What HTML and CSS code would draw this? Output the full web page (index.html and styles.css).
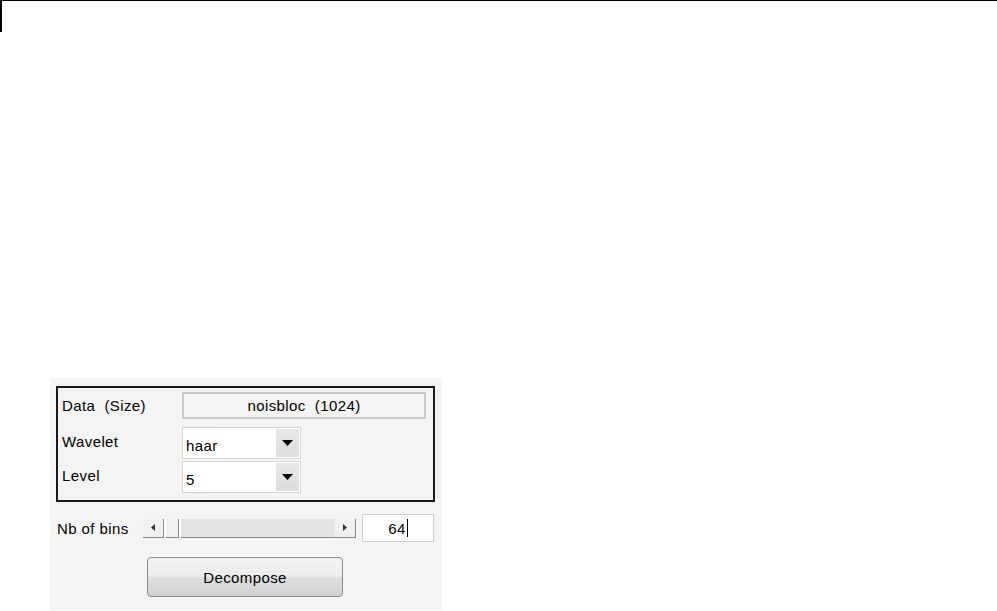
FILE: index.html
```html
<!DOCTYPE html>
<html>
<head>
<meta charset="utf-8">
<link rel="stylesheet" href="styles.css">
</head>
<body>
<div class="corner"></div>
<div class="panel">
  <div class="frame">
    <div class="row r1">
      <span class="lbl">Data  (Size)</span>
      <div class="field">noisbloc  (1024)</div>
    </div>
    <div class="row r2">
      <span class="lbl">Wavelet</span>
      <div class="popup"><span class="val">haar</span><span class="abtn"><svg width="11" height="6" viewBox="0 0 11 6"><path d="M0 0H11L5.5 6Z" fill="#000"/></svg></span></div>
    </div>
    <div class="row r3">
      <span class="lbl">Level</span>
      <div class="popup"><span class="val">5</span><span class="abtn"><svg width="11" height="6" viewBox="0 0 11 6"><path d="M0 0H11L5.5 6Z" fill="#000"/></svg></span></div>
    </div>
  </div>
  <div class="bins">
    <span class="blbl">Nb of bins</span>
    <div class="slider">
      <span class="sbtn"><svg width="4" height="7" viewBox="0 0 4 7"><path d="M4 0V7L0 3.5Z" fill="#333"/></svg></span>
      <span class="thumb"></span>
      <span class="track"></span>
      <span class="sbtn"><svg width="4" height="7" viewBox="0 0 4 7"><path d="M0 0V7L4 3.5Z" fill="#333"/></svg></span>
    </div>
    <div class="edit">64<span class="caret"></span></div>
  </div>
  <div class="btnrow"><div class="button">Decompose</div></div>
</div>
</body>
</html>
```
FILE: styles.css
```css
html, body {
  margin: 0;
  padding: 0;
  background: #fff;
}
body {
  font-family: "Liberation Sans", Arial, sans-serif;
  font-size: 15px;
  letter-spacing: 0.4px;
  color: #000;
}
.corner {
  height: 31px;
  border-top: 1px solid #000;
  border-left: 2px solid #000;
}
.panel {
  margin: 346px 0 0 50px;
  width: 392px;
  height: 232px;
  background: #f4f4f4;
  box-sizing: border-box;
  padding: 8px 0 0 6px;
}
.frame {
  width: 379px;
  height: 116px;
  box-sizing: border-box;
  border: 2px solid #1a1a1a;
  padding: 4px 0 0 4px;
}
.row {
  display: flex;
  align-items: center;
}
.lbl {
  width: 120px;
  white-space: pre;
}
.r2 { margin-top: 8px; }
.r3 { margin-top: 2px; }
.r2 .lbl, .r3 .lbl { position: relative; top: -2px; }
.field {
  width: 244px;
  height: 27px;
  box-sizing: border-box;
  border: 2px solid #c9c9c9;
  background: #f4f4f4;
  display: flex;
  align-items: center;
  justify-content: center;
  white-space: pre;
}
.popup {
  width: 119px;
  height: 32px;
  box-sizing: border-box;
  border: 1px solid #d6d6d6;
  background: #fff;
  display: flex;
  align-items: stretch;
  padding: 1px;
}
.popup .val {
  flex: 1;
  display: flex;
  align-items: center;
  padding-left: 2px;
  padding-top: 4px;
}
.abtn {
  width: 23px;
  background: linear-gradient(#e8e8e8, #dcdcdc);
  display: flex;
  align-items: center;
  justify-content: center;
}
.bins {
  display: flex;
  align-items: center;
  margin-top: 12px;
  height: 28px;
}
.blbl {
  width: 86px;
  margin-left: 1px;
}
.slider {
  width: 213px;
  height: 19px;
  display: flex;
  align-items: stretch;
  background: #fff;
}
.sbtn {
  width: 20px;
  background: #f0f0f0;
  border-right: 1px solid #8a8a8a;
  border-bottom: 1px solid #8a8a8a;
  display: flex;
  align-items: center;
  justify-content: center;
}
.thumb {
  width: 12px;
  margin-left: 2px;
  background: #f0f0f0;
  border-right: 1px solid #8a8a8a;
  border-bottom: 1px solid #8a8a8a;
}
.track {
  flex: 1;
  margin-left: 1px;
  background: #e3e3e3;
  border-left: 1px solid #fff;
  border-bottom: 1px solid #8a8a8a;
}
.edit {
  margin-left: 6px;
  width: 72px;
  height: 28px;
  box-sizing: border-box;
  border: 1px solid #d0d0d0;
  background: #fff;
  display: flex;
  align-items: center;
  justify-content: center;
}
.caret {
  width: 1px;
  height: 18px;
  background: #000;
  margin-left: 1px;
}
.btnrow {
  margin-top: 15px;
  padding-left: 91px;
}
.button {
  width: 196px;
  height: 40px;
  box-sizing: border-box;
  border: 1px solid #8a8a8a;
  border-radius: 4px;
  background: linear-gradient(#f3f3f3 0%, #ececec 48%, #dedede 52%, #d2d2d2 100%);
  display: flex;
  align-items: center;
  justify-content: center;
}
```
